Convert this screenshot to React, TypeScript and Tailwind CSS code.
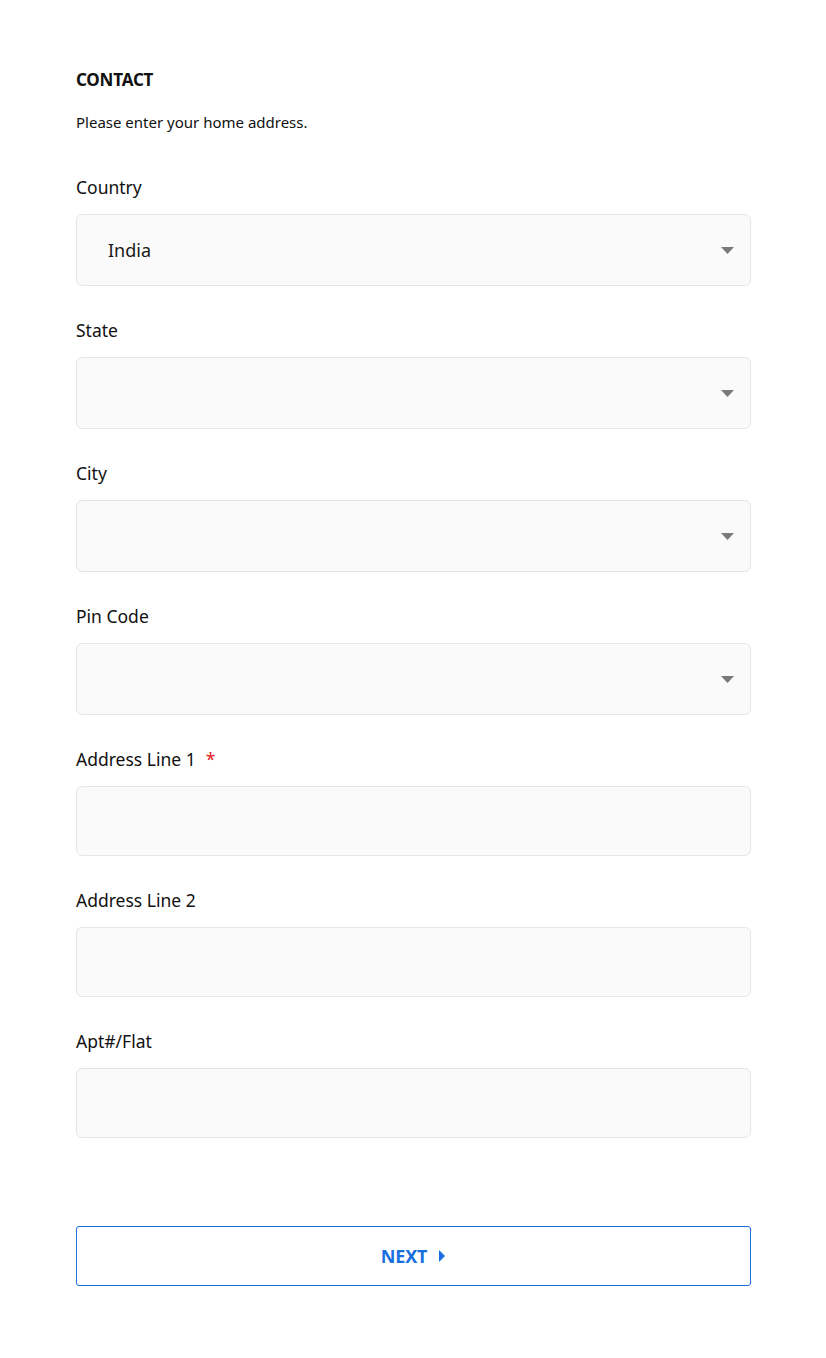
const fields = [
  { label: "Country", type: "select", value: "India" },
  { label: "State", type: "select", value: "" },
  { label: "City", type: "select", value: "" },
  { label: "Pin Code", type: "select", value: "" },
  { label: "Address Line 1", type: "input", required: true },
  { label: "Address Line 2", type: "input" },
  { label: "Apt#/Flat", type: "input" },
];

const App = () => {
  return (
    <div
      className="min-h-[1358px] w-full bg-white text-[#111] pl-[76px] pr-[75px] pt-[69px]"
      style={{ fontFamily: '"Noto Sans", "Open Sans", sans-serif' }}
    >
      <h1 className="text-[17px] font-bold leading-[22px] tracking-[-0.2px]">CONTACT</h1>
      <p className="mt-[21px] text-[15px] leading-[20px]">Please enter your home address.</p>

      <div className="mt-[43px] flex flex-col">
        {fields.map((f, i) => (
          <div key={i} className={i === 0 ? "" : "mt-[32px]"}>
            <div className="flex items-center h-[24px] text-[17.5px] leading-[24px]">
              <span>{f.label}</span>
              {f.required && <span className="ml-[10px] text-[#e02020]">*</span>}
            </div>
            {f.type === "select" ? (
              <div className="mt-[15px] h-[72px] rounded-[6px] border border-[#e6e6e6] bg-[#fafafa] flex items-center justify-between pl-[31px] pr-[16px]">
                <span className="text-[18px] text-[#1a1a1a]">{f.value}</span>
                <svg width="13" height="7" viewBox="0 0 13 7">
                  <path d="M0 0h13L6.5 7z" fill="#7a7a7a" />
                </svg>
              </div>
            ) : (
              <div className="mt-[15px] h-[70px] rounded-[6px] border border-[#e6e6e6] bg-[#fafafa]" />
            )}
          </div>
        ))}
      </div>

      <button className="mt-[88px] w-full h-[60px] rounded-[3px] border border-[#1a6fdf] bg-white flex items-center justify-center gap-[12px] text-[#1a6fdf]">
        <span className="text-[18px] font-bold tracking-[-0.2px]">NEXT</span>
        <svg width="7" height="12" viewBox="0 0 7 12">
          <path d="M0 0l6 6-6 6z" fill="#1a6fdf" />
        </svg>
      </button>
    </div>
  );
};

export default App;
